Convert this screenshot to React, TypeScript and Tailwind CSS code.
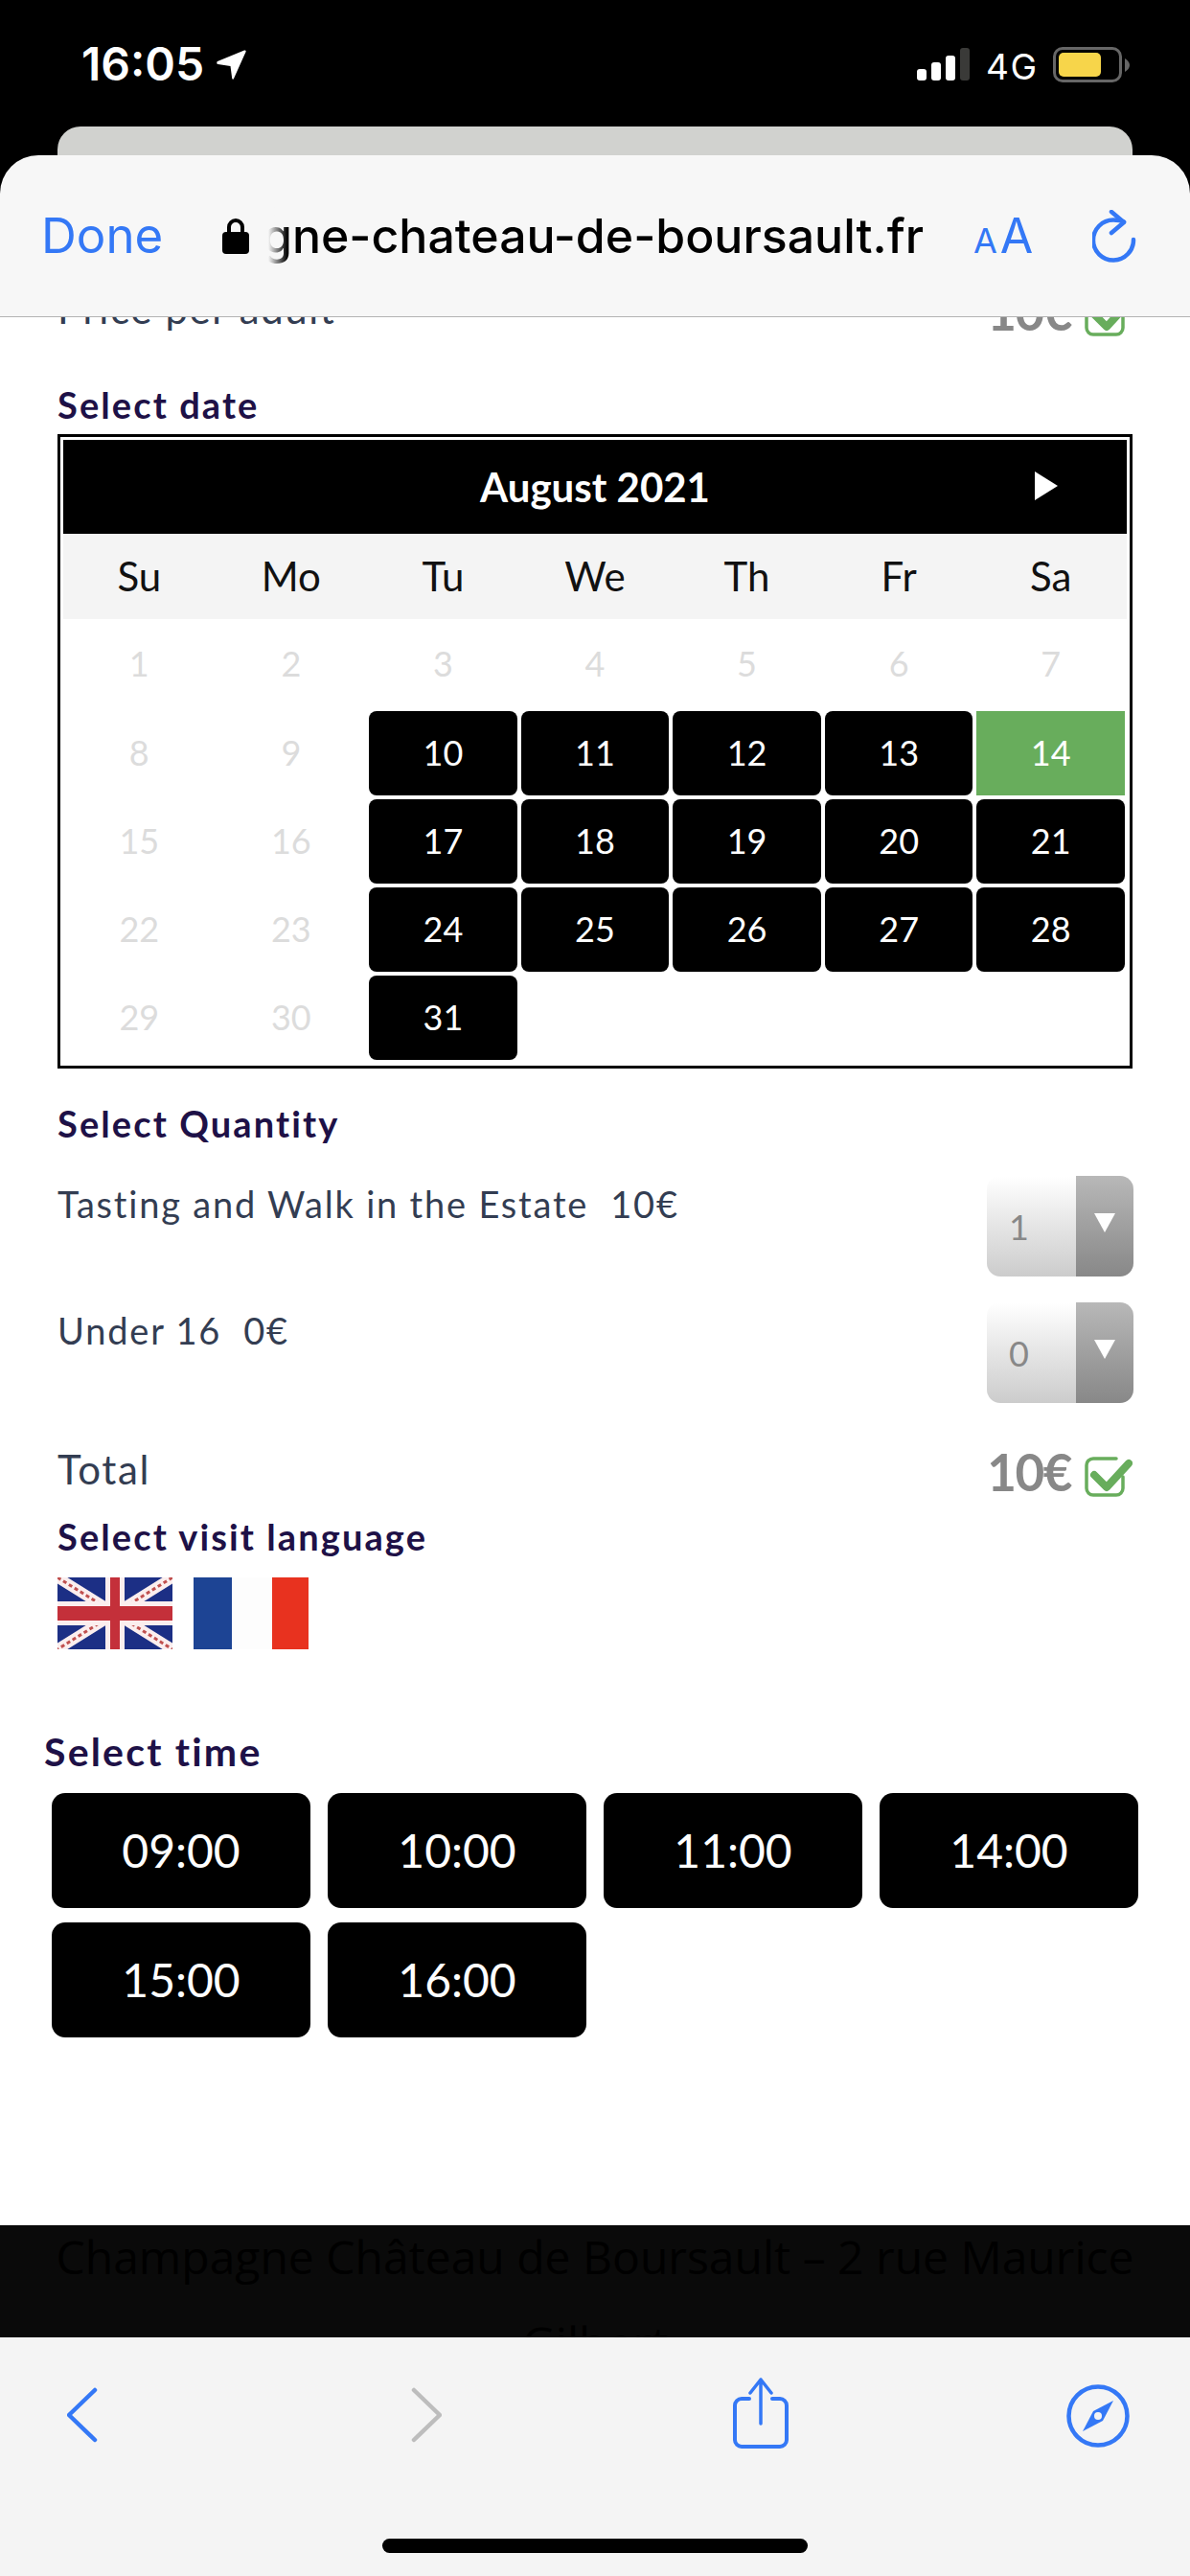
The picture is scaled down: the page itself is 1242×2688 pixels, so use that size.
const WEEKDAYS = ["Su", "Mo", "Tu", "We", "Th", "Fr", "Sa"];
const DAYS = Array.from({ length: 31 }, (_, i) => i + 1);
const TIMES = ["09:00", "10:00", "11:00", "14:00", "15:00", "16:00"];
const LABEL = "leading-[46px] font-bold text-[#1e1147]";
const BODY = "text-[38px] leading-[58px] tracking-[1.8px] text-[#333d52]";

function CheckIcon() {
  return (
    <svg width="50" height="44" viewBox="0 0 50 44" fill="none" className="mt-[22px]">
      <path
        d="M33 2H9a7 7 0 0 0-7 7v24a7 7 0 0 0 7 7h24a7 7 0 0 0 7-7V21"
        stroke="#68ad5c"
        strokeWidth="3.5"
        strokeLinecap="round"
      />
      <path d="M10 19l13 13L46 7" stroke="#68ad5c" strokeWidth="8" strokeLinecap="round" strokeLinejoin="round" />
    </svg>
  );
}

function PriceRow({ label, className }: { label: string; className?: string }) {
  return (
    <div className={`flex h-[70px] justify-between ${className ?? ""}`}>
      <span className="pt-[6px] text-[42px] leading-[58px] tracking-[1.6px] text-[#333d52]">{label}</span>
      <div className="flex gap-[14px]">
        <span className="text-[53px] leading-[75px] font-bold tracking-[-1.5px] text-[#888888]">10€</span>
        <CheckIcon />
      </div>
    </div>
  );
}

function QuantityRow({ label, value, className }: { label: string; value: number; className?: string }) {
  return (
    <div className={`flex items-start justify-between ${className ?? ""}`}>
      <span className={`${BODY} whitespace-pre`}>{label}</span>
      <div className="-mr-[1px] flex h-[105px] w-[153px]">
        <div className="flex w-[93px] items-center rounded-l-[14px] bg-gradient-to-b from-white to-[#cccccc] pl-[23px] text-[36px] text-[#888888]">
          {value}
        </div>
        <div className="flex w-[60px] justify-center rounded-r-[14px] bg-gradient-to-b from-[#b8b8b8] to-[#888888] pt-[39px]">
          <svg width="22" height="20" viewBox="0 0 22 20">
            <path d="M0 0h22L11 20z" fill="#ffffff" />
          </svg>
        </div>
      </div>
    </div>
  );
}

function Calendar() {
  return (
    <div className="mt-[8px] h-[662px] border-[3px] border-black p-[3px]">
      <div className="relative flex h-[98px] items-center justify-center bg-black">
        <span className="text-[42px] font-bold text-white">August 2021</span>
        <svg width="24" height="30" viewBox="0 0 24 30" className="absolute right-[72px] top-[33px]">
          <path d="M0 0l24 15L0 30z" fill="#ffffff" />
        </svg>
      </div>
      <div className="grid h-[89px] grid-cols-7 items-center bg-[#f4f4f4] text-center text-[42px] text-[#111111]">
        {WEEKDAYS.map((day) => (
          <span key={day}>{day}</span>
        ))}
      </div>
      <div className="grid grid-cols-7 text-center text-[36px]">
        {DAYS.map((day) => {
          const rowHeight = day <= 7 ? "h-[94px]" : "h-[92px]";
          const column = (day - 1) % 7;
          // Sundays and Mondays are closed, as is everything before the 10th
          if (day < 10 || column < 2) {
            return (
              <div key={day} className={`flex ${rowHeight} items-center justify-center pb-[3px] text-[#dcdcdc]`}>
                {day}
              </div>
            );
          }
          return (
            <div key={day} className={`${rowHeight} p-[2px]`}>
              <div
                className={`flex h-full items-center justify-center pb-[2px] text-white ${
                  day === 14 ? "bg-[#68ad5c]" : "rounded-[8px] bg-black"
                }`}
              >
                {day}
              </div>
            </div>
          );
        })}
      </div>
    </div>
  );
}

function UkFlag() {
  return (
    <svg width="120" height="75" viewBox="0 0 120 75" className="blur-[0.6px]">
      <rect width="120" height="75" fill="#1c2f85" />
      <path d="M0 0l120 75M120 0L0 75" stroke="#fbeeee" strokeWidth="11" />
      <path d="M0 0l120 75M120 0L0 75" stroke="#c0504f" strokeWidth="3" strokeDasharray="4 3" />
      <path d="M60 0v75" stroke="#fbeeee" strokeWidth="20" />
      <path d="M0 37.500h120" stroke="#fbeeee" strokeWidth="25" />
      <path d="M60 0v75" stroke="#c4303a" strokeWidth="10" />
      <path d="M0 37.500h120" stroke="#c4303a" strokeWidth="15" />
    </svg>
  );
}

function FrFlag() {
  return (
    <svg width="120" height="75" viewBox="0 0 120 75" className="blur-[0.6px]">
      <rect width="40" height="75" fill="#1d4494" />
      <rect x="40" width="42" height="75" fill="#fdfdfd" />
      <rect x="82" width="38" height="75" fill="#e8321f" />
    </svg>
  );
}

function StatusBar() {
  return (
    <div className="relative h-[162px] bg-black font-['Inter',sans-serif] text-white">
      <span className="absolute left-[85px] top-[38px] text-[48px] leading-[58px] font-semibold">16:05</span>
      <svg width="32" height="33" viewBox="0 0 32 33" className="absolute left-[226px] top-[51px]">
        <path
          d="M1 13L29 1.500c1-.4 2 .5 1.600 1.500L18 31c-.4 1-1.600.8-1.800-.2L14.500 18 1.500 16c-1.500-.3-1.500-2.500-.5-3z"
          fill="#ffffff"
        />
      </svg>
      <svg width="56" height="36" viewBox="0 0 56 36" className="absolute left-[957px] top-[49px]">
        <rect x="0" y="23" width="10" height="12" rx="3" fill="#ffffff" />
        <rect x="15" y="16" width="10" height="19" rx="3" fill="#ffffff" />
        <rect x="30" y="9" width="10" height="26" rx="3" fill="#ffffff" />
        <rect x="45" y="1" width="10" height="34" rx="3" fill="#3a3a38" />
      </svg>
      <span className="absolute left-[1029px] top-[47px] text-[37px] leading-[46px] tracking-[1.5px]">4G</span>
      <div className="absolute left-[1099px] top-[49px] h-[37px] w-[72px] rounded-[10px] border-[3px] border-[#666666] p-[3px]">
        <div className="h-full w-[44px] rounded-[5px] bg-[#f7d54a]" />
      </div>
      <svg width="5" height="14" viewBox="0 0 5 14" className="absolute left-[1174px] top-[61px]">
        <path d="M0 0c3 2 5 4 5 7s-2 5-5 7z" fill="#666666" />
      </svg>
      <div className="absolute bottom-0 left-[60px] h-[30px] w-[1122px] rounded-t-[24px] bg-[#d1d2cf]" />
    </div>
  );
}

function BrowserHeader() {
  return (
    <div className="bg-black">
      <div className="flex h-[169px] items-start rounded-t-[40px] border-b border-[#b3b3b3] bg-[#f7f7f7] pt-[51px] font-['Inter',sans-serif]">
        <span className="ml-[43px] w-[189px] shrink-0 text-[51px] leading-[66px] text-[#3478f6]">Done</span>
        <svg width="28" height="38" viewBox="0 0 28 38" className="mt-[14px] shrink-0">
          <path d="M7 17V10a7 7 0 0 1 14 0v7" fill="none" stroke="#000000" strokeWidth="4" />
          <rect y="15" width="28" height="23" rx="4" fill="#000000" />
        </svg>
        <div className="relative ml-[20px] flex w-[684px] shrink-0 justify-end overflow-hidden text-[50px] leading-[66px] font-medium whitespace-nowrap text-black">
          gne-chateau-de-boursault.fr
          <div className="absolute inset-y-0 left-0 w-[20px] bg-gradient-to-r from-[#f7f7f7] to-transparent" />
        </div>
        <div className="ml-[52px] flex w-[124px] shrink-0 items-baseline leading-[66px] text-[#3478f6]">
          <span className="text-[36px]">A</span>
          <span className="ml-[3px] text-[50px]">A</span>
        </div>
        <svg width="48" height="56" viewBox="0 0 48 56" fill="none" className="mt-[6px] shrink-0">
          <path
            d="M43 31a21 21 0 1 1-21-20.500c4 0 8 .5 11 2"
            stroke="#3478f6"
            strokeWidth="4.500"
            strokeLinecap="round"
          />
          <path d="M20 2l13 11-13 11" stroke="#3478f6" strokeWidth="4.500" strokeLinecap="round" strokeLinejoin="round" />
        </svg>
      </div>
    </div>
  );
}

function BottomToolbar() {
  return (
    <div className="relative h-[249px] bg-[#f4f4f4]">
      <svg width="32" height="58" viewBox="0 0 32 58" fill="none" className="absolute left-[70px] top-[52px]">
        <path d="M29 3L2 29l27 26" stroke="#3478f6" strokeWidth="4.500" strokeLinecap="round" strokeLinejoin="round" />
      </svg>
      <svg width="32" height="58" viewBox="0 0 32 58" fill="none" className="absolute left-[429px] top-[52px]">
        <path d="M3 3l27 26L3 55" stroke="#bdbdbd" strokeWidth="4.500" strokeLinecap="round" strokeLinejoin="round" />
      </svg>
      <svg width="60" height="76" viewBox="0 0 60 76" fill="none" className="absolute left-[764px] top-[42px]">
        <path
          d="M18 22H10a7 7 0 0 0-7 7v36a7 7 0 0 0 7 7h40a7 7 0 0 0 7-7V29a7 7 0 0 0-7-7h-8"
          stroke="#3478f6"
          strokeWidth="4"
          strokeLinecap="round"
        />
        <path d="M30 48V2M19 16L30 2l11 14" stroke="#3478f6" strokeWidth="3.500" strokeLinecap="round" strokeLinejoin="round" />
      </svg>
      <svg width="66" height="66" viewBox="0 0 66 66" fill="none" className="absolute left-[1113px] top-[49px]">
        <circle cx="33" cy="33" r="30.500" stroke="#3478f6" strokeWidth="4.500" />
        <path d="M49 17L38 38 17 49l11-21z" fill="#3478f6" />
        <circle cx="33" cy="33" r="4" fill="#f4f4f4" />
      </svg>
      <div className="absolute left-[399px] top-[210px] h-[15px] w-[444px] rounded-full bg-black" />
    </div>
  );
}

export default function App() {
  return (
    <div className="flex h-[2688px] w-[1242px] flex-col overflow-hidden bg-white font-['Lato',sans-serif]">
      <StatusBar />
      <BrowserHeader />
      <main className="flex-1 overflow-hidden bg-white px-[60px]">
        <PriceRow label="Price per adult" className="-mt-[44px]" />
        <h2 className={`mt-[42px] text-[38px] tracking-[2.1px] ${LABEL}`}>Select date</h2>
        <Calendar />
        <h2 className={`mt-[34px] text-[38px] tracking-[2.1px] ${LABEL}`}>Select Quantity</h2>
        <QuantityRow label="Tasting and Walk in the Estate  10€" value={1} className="mt-[32px]" />
        <QuantityRow label="Under 16  0€" value={0} className="mt-[27px]" />
        <PriceRow label="Total" className="mt-[34px]" />
        <h2 className={`mt-[12px] text-[38px] tracking-[2.1px] ${LABEL}`}>Select visit language</h2>
        <div className="mt-[20px] flex gap-[22px]">
          <UkFlag />
          <FrFlag />
        </div>
        <h2 className={`mt-[84px] -ml-[14px] text-[41px] tracking-[2.2px] ${LABEL}`}>Select time</h2>
        <div className="mt-[20px] -ml-[6px] grid w-[1134px] grid-cols-4 gap-x-[18px] gap-y-[15px]">
          {TIMES.map((time) => (
            <button
              key={time}
              type="button"
              className="flex h-[120px] items-center justify-center rounded-[14px] bg-black text-[48px] text-white"
            >
              {time}
            </button>
          ))}
        </div>
      </main>
      <footer className="h-[117px] overflow-hidden bg-[#0a0a0a] px-[40px] text-center font-['Open_Sans',sans-serif] text-[48px] leading-[90px] text-black">
        <p className="-mt-[12px]">
          Champagne Château de Boursault – 2 rue Maurice
          <br />
          Gilbert
        </p>
      </footer>
      <BottomToolbar />
    </div>
  );
}
